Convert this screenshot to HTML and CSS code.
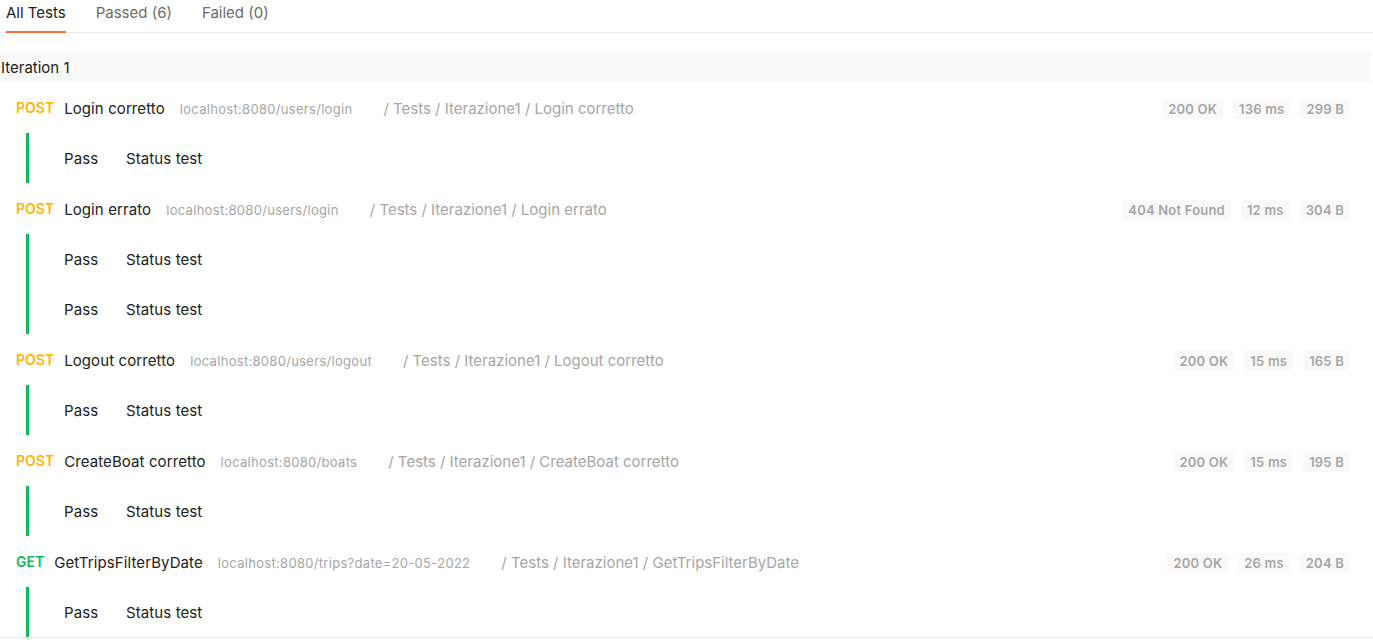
FILE: index.html
```html
<!DOCTYPE html>
<html>
<head>
<meta charset="utf-8">
<link rel="stylesheet" href="styles.css">
</head>
<body>
<div class="tabs">
  <div class="tab active">All Tests</div>
  <div class="tab">Passed (6)</div>
  <div class="tab">Failed (0)</div>
</div>
<div class="results">
  <div class="iteration">Iteration 1</div>

  <div class="req">
    <span class="method post">POST</span>
    <span class="name">Login corretto</span>
    <span class="url">localhost:8080/users/login</span>
    <span class="path">/ Tests / Iterazione1 / Login corretto</span>
    <div class="badges"><span class="badge">200 OK</span><span class="badge">136 ms</span><span class="badge">299 B</span></div>
  </div>
  <div class="tests">
    <div class="test"><span class="status">Pass</span><span class="tname">Status test</span></div>
  </div>

  <div class="req">
    <span class="method post">POST</span>
    <span class="name">Login errato</span>
    <span class="url">localhost:8080/users/login</span>
    <span class="path">/ Tests / Iterazione1 / Login errato</span>
    <div class="badges"><span class="badge">404 Not Found</span><span class="badge">12 ms</span><span class="badge">304 B</span></div>
  </div>
  <div class="tests">
    <div class="test"><span class="status">Pass</span><span class="tname">Status test</span></div>
    <div class="test"><span class="status">Pass</span><span class="tname">Status test</span></div>
  </div>

  <div class="req">
    <span class="method post">POST</span>
    <span class="name">Logout corretto</span>
    <span class="url">localhost:8080/users/logout</span>
    <span class="path">/ Tests / Iterazione1 / Logout corretto</span>
    <div class="badges"><span class="badge">200 OK</span><span class="badge">15 ms</span><span class="badge">165 B</span></div>
  </div>
  <div class="tests">
    <div class="test"><span class="status">Pass</span><span class="tname">Status test</span></div>
  </div>

  <div class="req">
    <span class="method post">POST</span>
    <span class="name">CreateBoat corretto</span>
    <span class="url">localhost:8080/boats</span>
    <span class="path">/ Tests / Iterazione1 / CreateBoat corretto</span>
    <div class="badges"><span class="badge">200 OK</span><span class="badge">15 ms</span><span class="badge">195 B</span></div>
  </div>
  <div class="tests">
    <div class="test"><span class="status">Pass</span><span class="tname">Status test</span></div>
  </div>

  <div class="req">
    <span class="method get">GET</span>
    <span class="name">GetTripsFilterByDate</span>
    <span class="url">localhost:8080/trips?date=20-05-2022</span>
    <span class="path">/ Tests / Iterazione1 / GetTripsFilterByDate</span>
    <div class="badges"><span class="badge">200 OK</span><span class="badge">26 ms</span><span class="badge">204 B</span></div>
  </div>
  <div class="tests">
    <div class="test"><span class="status">Pass</span><span class="tname">Status test</span></div>
  </div>
</div>
<div class="footer"></div>
</body>
</html>
```

FILE: styles.css
```css
html, body {
  margin: 0;
  padding: 0;
  background: #ffffff;
  font-family: Inter, "Noto Sans", sans-serif;
  color: #212121;
  overflow: hidden;
}

.tabs {
  display: flex;
  gap: 30px;
  padding-left: 6px;
  border-bottom: 1px solid #ededed;
  height: 33px;
  box-sizing: border-box;
}

.tab {
  font-size: 15px;
  line-height: 20px;
  padding-top: 3px;
  color: #6b6b6b;
  height: 33px;
  box-sizing: border-box;
}

.tab.active {
  color: #212121;
  border-bottom: 2px solid #ff6c37;
}

.results {
  width: 1370px;
  margin-top: 19px;
}

.iteration {
  height: 30px;
  line-height: 30px;
  padding-top: 1px;
  box-sizing: border-box;
  background: #f9f9f9;
  font-size: 15px;
  padding-left: 1px;
  color: #212121;
}

.req {
  display: flex;
  align-items: center;
  height: 51px;
  padding: 2px 20px 0 16px;
  box-sizing: border-box;
}

.method {
  font-size: 14px;
  font-weight: 600;
  margin-right: 10px;
  position: relative;
  top: -1px;
}

.method.post { color: #ffb400; }
.method.get { color: #0cbb52; }

.name {
  font-size: 15px;
  letter-spacing: 0.1px;
  color: #212121;
}

.url {
  font-size: 13px;
  letter-spacing: 0.3px;
  color: #a6a6a6;
  margin-left: 15px;
}

.path {
  font-size: 15px;
  color: #a6a6a6;
  margin-left: 31px;
}

.badges {
  margin-left: auto;
  display: flex;
  gap: 10px;
}

.badge {
  font-size: 13px;
  font-weight: 600;
  letter-spacing: 0.2px;
  line-height: 20px;
  padding: 0 6px;
  color: #a6a6a6;
  background: #f9f9f9;
  border-radius: 4px;
}

.tests {
  margin-left: 26px;
  border-left: 3px solid #0cbb52;
}

.test {
  display: flex;
  align-items: center;
  height: 50px;
  padding-left: 35px;
  font-size: 15px;
  letter-spacing: 0.1px;
  color: #212121;
}

.status {
  width: 62px;
}

.footer {
  border-top: 1px solid #ededed;
}
```
